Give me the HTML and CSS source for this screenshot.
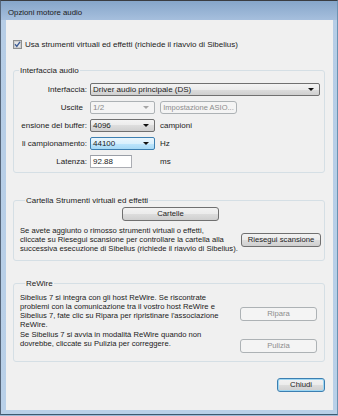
FILE: index.html
```html
<!DOCTYPE html>
<html>
<head>
  <title>Opzioni motore audio</title>
  <link rel="stylesheet" href="styles.css">
</head>
<body>
  <div class="window">
    <div class="title-bar">Opzioni motore audio</div>
    <div class="client">
      <label class="check-row">
        <svg class="checkbox" width="9" height="9" viewBox="0 0 9 9">
          <rect x="0.5" y="0.5" width="8" height="8" fill="#f4f4f4" stroke="#8e8f8f"/>
          <rect x="1.5" y="1.5" width="6" height="6" fill="#e6e6e6" stroke="#d0d0d0"/>
          <path d="M2 4.3 L3.8 6.4 L7 1.8" fill="none" stroke="#3d5c95" stroke-width="1.4"/>
        </svg>
        Usa strumenti virtuali ed effetti (richiede il riavvio di Sibelius)
      </label>

      <fieldset class="group group-audio">
        <legend>Interfaccia audio</legend>
        <div class="field-row first">
          <span class="field-label">Interfaccia:</span>
          <div class="combo combo-wide">Driver audio principale (DS)<span class="arrow"></span></div>
        </div>
        <div class="field-row">
          <span class="field-label uscite">Uscite</span>
          <div class="combo combo-small disabled">1/2<span class="arrow"></span></div>
          <button class="btn btn-asio" disabled>Impostazione ASIO...</button>
        </div>
        <div class="field-row">
          <span class="field-label">ensione del buffer:</span>
          <div class="combo combo-small">4096<span class="arrow"></span></div>
          <span class="unit">campioni</span>
        </div>
        <div class="field-row">
          <span class="field-label">li campionamento:</span>
          <div class="combo combo-small focused">44100<span class="arrow"></span></div>
          <span class="unit">Hz</span>
        </div>
        <div class="field-row">
          <span class="field-label">Latenza:</span>
          <div class="text-input">92.88</div>
          <span class="unit unit-ms">ms</span>
        </div>
      </fieldset>

      <fieldset class="group group-folder">
        <legend>Cartella Strumenti virtuali ed effetti</legend>
        <button class="btn btn-folders">Cartelle</button>
        <div class="folder-row">
          <p class="note">Se avete aggiunto o rimosso strumenti virtuali o effetti,<br>cliccate su Riesegui scansione per controllare la cartella alla<br>successiva esecuzione di Sibelius (richiede il riavvio di Sibelius).</p>
          <button class="btn btn-rescan">Riesegui scansione</button>
        </div>
      </fieldset>

      <fieldset class="group group-rewire">
        <legend>ReWire</legend>
        <div class="rewire-row">
          <p class="note">Sibelius 7 si integra con gli host ReWire. Se riscontrate<br>problemi con la comunicazione tra il vostro host ReWire e<br>Sibelius 7, fate clic su Ripara per ripristinare l'associazione<br>ReWire.</p>
          <button class="btn btn-side btn-repair" disabled>Ripara</button>
        </div>
        <div class="rewire-row second">
          <p class="note">Se Sibelius 7 si avvia in modalità ReWire quando non<br>dovrebbe, cliccate su Pulizia per correggere.</p>
          <button class="btn btn-side btn-clean" disabled>Pulizia</button>
        </div>
      </fieldset>

      <div class="actions">
        <button class="btn btn-default">Chiudi</button>
      </div>
    </div>
  </div>
</body>
</html>
```

FILE: styles.css
```css
body {
  margin: 0;
  background: #9db9d7;
  font-family: "Liberation Sans", Arial, sans-serif;
  font-size: 8px;
  color: #1b1b1b;
}

.window {
  width: 338px;
  height: 415px;
  box-sizing: border-box;
  border-top: 1px solid #3a3d42;
  border-left: 1px solid #56667a;
  border-right: 1px solid #6b93b2;
  border-bottom: 1px solid #3c5a70;
  background: linear-gradient(#86a6ca 0, #a6bfdd 19px, #b6cde6 19px, #b9d0e8 100%);
}

.title-bar {
  height: 19px;
  box-sizing: border-box;
  padding: 4px 0 0 7px;
  line-height: 16px;
  font-size: 7.8px;
  color: #1a1a1a;
}

.client {
  margin: 0 4px 0 5px;
  height: 390px;
  box-sizing: border-box;
  padding: 20px 8px 0 7px;
  background: #f0f0f0;
}

.check-row {
  display: flex;
  align-items: center;
  height: 9px;
  line-height: 9px;
}

.checkbox {
  margin-right: 3px;
  flex: none;
}

/* group boxes */
.group {
  margin: 0;
  min-width: 0;
  border: 1px solid #d5dfe5;
  border-radius: 3px;
  padding: 0;
}

.group legend {
  padding: 0 1px;
  margin-left: 5px;
  line-height: 9px;
}

.group-audio {
  margin-top: 17px;
  padding: 0 4px 4px 0;
}

.field-row {
  display: flex;
  align-items: center;
  height: 13px;
  margin-top: 5px;
  line-height: 11px;
}

.field-row.first {
  margin-top: 8px;
}

.field-label {
  width: 73px;
  margin-right: 3px;
  text-align: right;
  white-space: nowrap;
  flex: none;
}

.field-label.uscite {
  width: 69px;
  margin-right: 7px;
}

.combo {
  display: flex;
  align-items: center;
  justify-content: space-between;
  height: 13px;
  box-sizing: border-box;
  padding: 0 5px 0 2px;
  border: 1px solid #707070;
  border-radius: 2px;
  background: linear-gradient(#f3f3f3 0%, #ebebeb 50%, #dddddd 50%, #cfcfcf 100%);
}

.combo-wide {
  width: 230px;
}

.combo-small {
  width: 65px;
}

.arrow {
  width: 0;
  height: 0;
  border-left: 3px solid transparent;
  border-right: 3px solid transparent;
  border-top: 3px solid #111;
}

.combo.disabled {
  border-color: #adb2b5;
  background: #f4f4f4;
  color: #8a8a8a;
}

.combo.disabled .arrow {
  border-top-color: #a6a6a6;
}

.combo.focused {
  border-color: #3c7fb1;
  background: linear-gradient(#eaf6fd 0%, #d9f0fc 50%, #bee6fd 50%, #a7d9f5 100%);
}

.text-input {
  width: 42px;
  height: 13px;
  box-sizing: border-box;
  padding-left: 2px;
  border: 1px solid #abadb3;
  border-top-color: #9a9fa7;
  background: #fff;
}

.unit {
  margin-left: 5px;
}

.unit-ms {
  margin-left: 28px;
}

/* buttons */
.btn {
  height: 14px;
  box-sizing: border-box;
  padding: 0;
  border: 1px solid #707070;
  border-radius: 3px;
  background: linear-gradient(#f2f2f2 0%, #ebebeb 50%, #dddddd 50%, #cfcfcf 100%);
  font-family: inherit;
  font-size: 7.7px;
  line-height: 12px;
  color: #1b1b1b;
  white-space: nowrap;
  overflow: hidden;
  flex: none;
}

.btn:disabled {
  border-color: #adb2b5;
  background: #f4f4f4;
  color: #8d8d8d;
}

.btn-asio {
  width: 77px;
  height: 13px;
  margin-left: 5px;
  line-height: 11px;
  font-size: 7.5px;
}

.group-folder {
  margin-top: 23px;
  padding: 0 3px 7px 6px;
}

.btn-folders {
  display: block;
  width: 97px;
  margin: 2px auto 0;
}

.folder-row {
  display: flex;
  align-items: center;
  justify-content: space-between;
  margin-top: 5px;
}

.note {
  margin: 0;
  font-size: 7.65px;
  line-height: 9px;
  white-space: nowrap;
}

.btn-rescan {
  width: 80px;
}

.group-rewire {
  margin-top: 18px;
  padding: 0 7px 8px 6px;
}

.rewire-row {
  display: flex;
  align-items: flex-start;
  justify-content: space-between;
  margin-top: 5px;
}

.rewire-row.second {
  margin-top: 1px;
}

.btn-side {
  width: 77px;
}

.btn-repair {
  margin-top: 14px;
}

.btn-clean {
  margin-top: 9px;
}

.actions {
  display: flex;
  justify-content: flex-end;
  margin-top: 16px;
}

.btn-default {
  width: 48px;
  border-color: #3c7fb1;
  box-shadow: inset 0 0 0 1px #9ed7f3;
}
```
